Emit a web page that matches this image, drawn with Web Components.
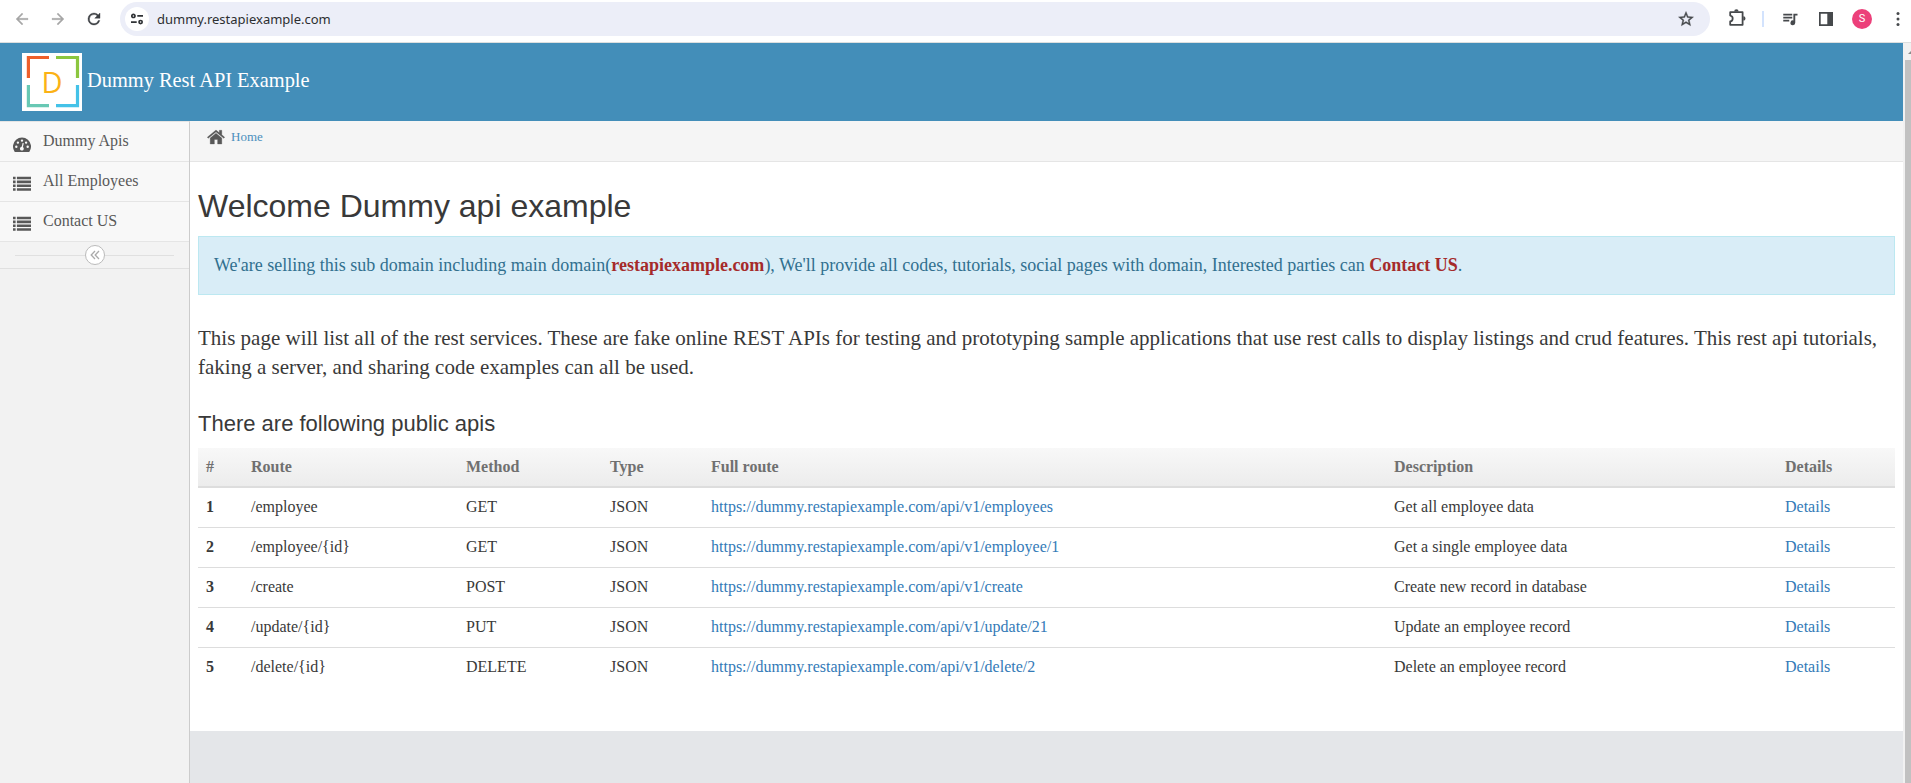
<!DOCTYPE html>
<html lang="en">
<head>
<meta charset="utf-8">
<title>Dummy Rest API Example</title>
<style>
html,body{margin:0;height:100%;overflow:hidden;background:#fff}
body{font-family:"Liberation Serif","Times New Roman",serif;font-size:16px;color:#393939}
</style>
</head>
<body>
<app-window></app-window>
<script>
function define(name, html, after) {
  const tpl = document.createElement('template');
  tpl.innerHTML = html;
  customElements.define(name, class extends HTMLElement {
    constructor() {
      super();
      this.attachShadow({mode: 'open'}).appendChild(tpl.content.cloneNode(true));
    }
    connectedCallback() { if (after) after(this, this.shadowRoot); }
  });
}

const icons = {
  back: [24, '<path fill="#a6a6a6" stroke="#a6a6a6" stroke-width=".4" d="M20 11H7.8l5.6-5.6L12 4l-8 8 8 8 1.4-1.4L7.8 13H20z"/>'],
  forward: [24, '<path fill="#a6a6a6" stroke="#a6a6a6" stroke-width=".4" d="M12 4l-1.4 1.4 5.6 5.6H4v2h12.2l-5.6 5.6L12 20l8-8z"/>'],
  reload: [24, '<path fill="#3c3f42" d="M17.65 6.35A7.96 7.96 0 0 0 12 4a8 8 0 1 0 7.73 10h-2.08A6 6 0 1 1 12 6c1.66 0 3.14.69 4.22 1.78L13 11h7V4z" stroke="#3c3f42" stroke-width=".5"/>'],
  tune: [16, '<g fill="none" stroke="#303336" stroke-width="1.7"><circle cx="4.4" cy="4.9" r="1.6"/><path d="M8.3 4.9H14M2 11.100h5.7"/><circle cx="11.6" cy="11.100" r="1.6"/></g>'],
  star: [24, '<path fill="#46494c" stroke="#46494c" stroke-width=".5" d="M22 9.24l-7.19-.62L12 2 9.19 8.63 2 9.24l5.46 4.73L5.82 21 12 17.27 18.18 21l-1.63-7.03zM12 15.4l-3.76 2.27 1-4.28-3.32-2.88 4.38-.38L12 6.1l1.71 4.04 4.38.38-3.32 2.88 1 4.28z"/>'],
  puzzle: [20, '<path fill="none" stroke="#46494c" stroke-width="1.8" stroke-linejoin="round" d="M3.200 4.200h12.400v12.600H3.200v-3.400c3.300-.4 3.300-5.400 0-5.800z"/><path fill="#46494c" d="M7.200 3.500a2.200 2.200 0 0 1 4.400 0zM16.300 8.200a2.200 2.200 0 0 1 0 4.400z"/>'],
  media: [24, '<path fill="#46494c" d="M3 5h12v2.300H3zM3 9h12v2.300H3zM3 13h8v2.300H3zM16.500 5H22v2.400h-3V17a3.200 3.200 0 1 1-2.500-3.100z"/>'],
  panel: [16, '<path fill="#46494c" d="M1 1h14v14H1zM2.700 2.700v10.600h6.600V2.700z" fill-rule="evenodd"/>'],
  dots: [16, '<g fill="#46494c"><circle cx="8" cy="2.500" r="1.500"/><circle cx="8" cy="8" r="1.500"/><circle cx="8" cy="13.500" r="1.500"/></g>'],
  gauge: [18, '<path transform="translate(0 2.500)" fill="#585858" fill-rule="evenodd" d="M1.500 14a9 9 0 1 1 15 0q-.3.500-.8.500H2.300q-.5 0-.8-.500zM3.300 8a1.200 1.200 0 1 0 0 2.400 1.200 1.200 0 0 0 0-2.400zM4.900 3.900a1.200 1.200 0 1 0 0 2.400 1.200 1.200 0 0 0 0-2.400zM9 1.900a1.200 1.200 0 1 0 0 2.400 1.200 1.200 0 0 0 0-2.400zM13.100 3.900a1.200 1.200 0 1 0 0 2.400 1.200 1.200 0 0 0 0-2.400zM14.700 8a1.200 1.200 0 1 0 0 2.400 1.200 1.200 0 0 0 0-2.400zM9.600 5.500l-.9 3.800a1.900 1.900 0 1 0 1.200.300l.9-3.800z"/>'],
  list: [18, '<path fill="#585858" d="M0 1.700h2.600v2.600H0zM3.900 1.700H18v2.600H3.900zM0 5.550h2.600v2.600H0zM3.900 5.550H18v2.600H3.900zM0 9.400h2.600V12H0zM3.900 9.400H18V12H3.900zM0 13.250h2.600v2.600H0zM3.900 13.250H18v2.600H3.900z"/>'],
  home: [18, '<path fill="#585858" stroke="#585858" stroke-width=".3" d="M9 2L.3 9.200l.9 1.100L9 3.900l7.800 6.400.9-1.100-2.900-2.400V2.300h-2.500v2.500zM9 5.200L3.200 10v6h4.200v-4.500h3.200V16h4.200v-6z"/>'],
  chevrons: [12, '<path fill="none" stroke="#aaa" stroke-width="1.300" d="M6 2L2.200 6 6 10M10 2L6.200 6 10 10"/>'],
  logo: [60, '<path fill="#fff" d="M0 0h60v58H0z"/><g fill="none" stroke-width="3.200"><path stroke="#ed5f2b" d="M27 4.500H6.400V25"/><path stroke="#8bc63f" d="M34 4.500h21.500V25"/><path stroke="#68c8b4" d="M6.400 32v20.700H27"/><path stroke="#44c2e8" d="M55.500 32v20.700H34"/></g>']
};
customElements.define('ui-icon', class extends HTMLElement {
  static get observedAttributes() { return ['name']; }
  attributeChangedCallback() { this.draw(); }
  connectedCallback() { this.draw(); }
  draw() {
    const icon = icons[this.getAttribute('name')];
    if (!icon) return;
    const [box, body] = icon;
    const s = this.getAttribute('size') || 18;
    if (!this.shadowRoot) this.attachShadow({mode: 'open'});
    this.shadowRoot.innerHTML = `<style>:host{display:block;flex:none;width:${s}px;height:${s}px}svg{display:block}</style>
      <svg width="${s}" height="${s}" viewBox="0 0 ${box} ${box}">${body}</svg>`;
  }
});

define('browser-bar', `<style>
:host{display:flex;flex:none;box-sizing:border-box;height:43px;padding:2px 0 0 13px;border-bottom:1px solid #dcdfdf;background:#fff;align-items:flex-start}
ui-icon{margin-top:8px}
.pill{display:flex;flex:none;box-sizing:border-box;width:1590px;height:34px;margin-left:17px;padding:0 15px 0 5px;border-radius:17px;background:#eceef8;align-items:center}
.pill ui-icon{margin:0}
.site{width:24px;height:24px;border-radius:50%;background:#fff;display:grid;place-items:center}
.url{font:13px/20px "Noto Sans",sans-serif;color:#2c2e31;margin-left:8px;flex:1}
.sep{width:2px;height:16px;background:#d3e3fd;margin:9px 0 0 15px}
.me{width:20px;height:20px;border-radius:50%;background:#ec407a;color:#fff;font:11px/20px Roboto,sans-serif;text-align:center;margin:7px 0 0 18px}
</style>
<ui-icon name="back"></ui-icon><ui-icon name="forward" style="margin-left:18px"></ui-icon><ui-icon name="reload" style="margin-left:18px"></ui-icon>
<div class="pill"><div class="site"><ui-icon name="tune" size="16"></ui-icon></div><span class="url">dummy.restapiexample.com</span><ui-icon name="star"></ui-icon></div>
<ui-icon name="puzzle" size="20" style="margin:6px 0 0 17px"></ui-icon><div class="sep"></div>
<ui-icon name="media" style="margin-left:17px"></ui-icon><ui-icon name="panel" size="16" style="margin:9px 0 0 19px"></ui-icon>
<div class="me">S</div><ui-icon name="dots" size="16" style="margin:9px 0 0 18px"></ui-icon>`);

define('page-header', `<style>
:host{display:flex;flex:none;height:78px;padding-left:22px;background:#438eb9;align-items:flex-start}
.logo{display:grid;margin-top:10px}
.logo>*{grid-area:1/1}
b{font:29px/57px "Open Sans",sans-serif;color:#fbb215;text-align:center;z-index:1}
.t{font-size:20.400px;line-height:24px;color:#fff;margin:25px 0 0 5px}
</style><div class="logo"><ui-icon name="logo" size="60"></ui-icon><b>D</b></div><div class="t">Dummy Rest API Example</div>`);

define('nav-item', `<style>
:host{display:flex;box-sizing:border-box;height:40px;padding-left:13px;border-bottom:1px solid #e5e5e5;background:#f8f8f8;color:#585858;font-size:16px;line-height:20px}
ui-icon{margin-top:13px}span{margin:9px 0 0 12px}
</style><ui-icon></ui-icon><span><slot></slot></span>`, (el, root) => root.querySelector('ui-icon').setAttribute('name', el.getAttribute('icon')));

define('side-bar', `<style>
:host{display:block;box-sizing:border-box;width:190px;flex:none;background:#f2f2f2;border-right:1px solid #ccc;border-top:1px solid #e5e5e5}
.toggle{display:flex;align-items:center;box-sizing:border-box;height:27px;padding:0 15px;border-bottom:1px solid #e0e0e0;background:#f3f3f3}
.toggle:before,.toggle:after{content:"";height:1px;flex:1;background:#e0e0e0}
.c{display:grid;place-items:center;box-sizing:border-box;width:20px;height:20px;border:1px solid #bbb;border-radius:50%;background:#fff}
</style>
<nav-item icon="gauge">Dummy Apis</nav-item><nav-item icon="list">All Employees</nav-item><nav-item icon="list">Contact US</nav-item>
<div class="toggle"><div class="c"><ui-icon name="chevrons" size="12"></ui-icon></div></div>`);

define('bread-crumbs', `<style>
:host{display:flex;box-sizing:border-box;height:41px;padding-left:17px;background:#f5f5f5;border-bottom:1px solid #e5e5e5}
ui-icon{margin-top:7px}a{font-size:13px;line-height:16px;color:#4c8fbd;margin:8px 0 0 6px}
</style><ui-icon name="home"></ui-icon><a>Home</a>`);

define('info-alert', `<style>
:host{display:block;box-sizing:border-box;height:59px;border:1px solid #bce8f1;background:#d9edf7;color:#31708f;padding:17px 15px 0;font-size:18px;line-height:22px;white-space:nowrap}
::slotted(b){color:#a52a2a}
</style><slot></slot>`);

define('api-table', `<style>
:host{display:block}
.r{display:grid;grid-template-columns:45px 215px 144px 101px 683px 391px 118px;box-sizing:border-box;height:40px;border-bottom:1px solid #ddd;font-size:16px;line-height:20px}
.r:last-child{border-bottom:0}
.r>*{padding:9px 8px 0}
.h{background:linear-gradient(#f8f8f8,#ececec);color:#707070;font-weight:bold;border-bottom:2px solid #ddd}
a{color:#337ab7}
</style>`, (el, root) => {
  const cell = (tag, t) => { const n = document.createElement(tag); n.textContent = t; return n; };
  const row = (cls, nodes) => { const r = document.createElement('div'); r.className = cls; r.append(...nodes); root.append(r); };
  row('r h', ['#','Route','Method','Type','Full route','Description','Details'].map(t => cell('span', t)));
  [['/employee','GET','employees','Get all employee data'],
   ['/employee/{id}','GET','employee/1','Get a single employee data'],
   ['/create','POST','create','Create new record in database'],
   ['/update/{id}','PUT','update/21','Update an employee record'],
   ['/delete/{id}','DELETE','delete/2','Delete an employee record']].forEach(([route, method, path, desc], i) =>
    row('r', [cell('b', i + 1), cell('span', route), cell('span', method), cell('span', 'JSON'),
      cell('a', 'https://dummy.restapiexample.com/api/v1/' + path), cell('span', desc), cell('a', 'Details')]));
});

define('main-content', `<style>
:host{display:block;flex:1;min-width:0;background:#e4e6e9}
.page{box-sizing:border-box;height:569px;padding:21px 8px 0;background:#fff}
h1,h3{font-family:"Liberation Sans",Arial,sans-serif;font-weight:normal;margin:0}
h1{font-size:32px;line-height:46px;margin-bottom:7px}
p{font-size:21px;line-height:29px;margin:29px 0 29px}
h3{font-size:22px;line-height:26px;margin-bottom:11px}
</style><bread-crumbs></bread-crumbs><div class="page">
<h1>Welcome Dummy api example</h1>
<info-alert>We'are selling this sub domain including main domain(<b>restapiexample.com</b>), We'll provide all codes, tutorials, social pages with domain, Interested parties can <b>Contact US</b>.</info-alert>
<p>This page will list all of the rest services. These are fake online REST APIs for testing and prototyping sample applications that use rest calls to display listings and crud features. This rest api tutorials, faking a server, and sharing code examples can all be used.</p>
<h3>There are following public apis</h3>
<api-table></api-table></div>`);

define('scroll-bar', `<style>
:host{display:flex;flex-direction:column;width:8px;flex:none;background:#f1f1f1;overflow:hidden}
.a{height:17px;display:flex;align-items:center;padding-left:5px}
.t{flex:1;background:#c1c1c1;margin-left:2px}
svg{display:block;flex:none}
</style><div class="a"><svg width="8" height="4"><path fill="#8b8b8b" d="M0 4l4-4 4 4z"/></svg></div><div class="t"></div>`);

define('app-window', `<style>
:host{display:flex;flex-direction:column;width:1911px;height:783px;overflow:hidden}
.v{display:flex;flex:1;min-height:0}.d{display:flex;flex-direction:column;flex:1;min-width:0}.b{display:flex;flex:1;min-height:0}
</style><browser-bar></browser-bar><div class="v"><div class="d"><page-header></page-header><div class="b"><side-bar></side-bar><main-content></main-content></div></div><scroll-bar></scroll-bar></div>`);
</script>
</body>
</html>
